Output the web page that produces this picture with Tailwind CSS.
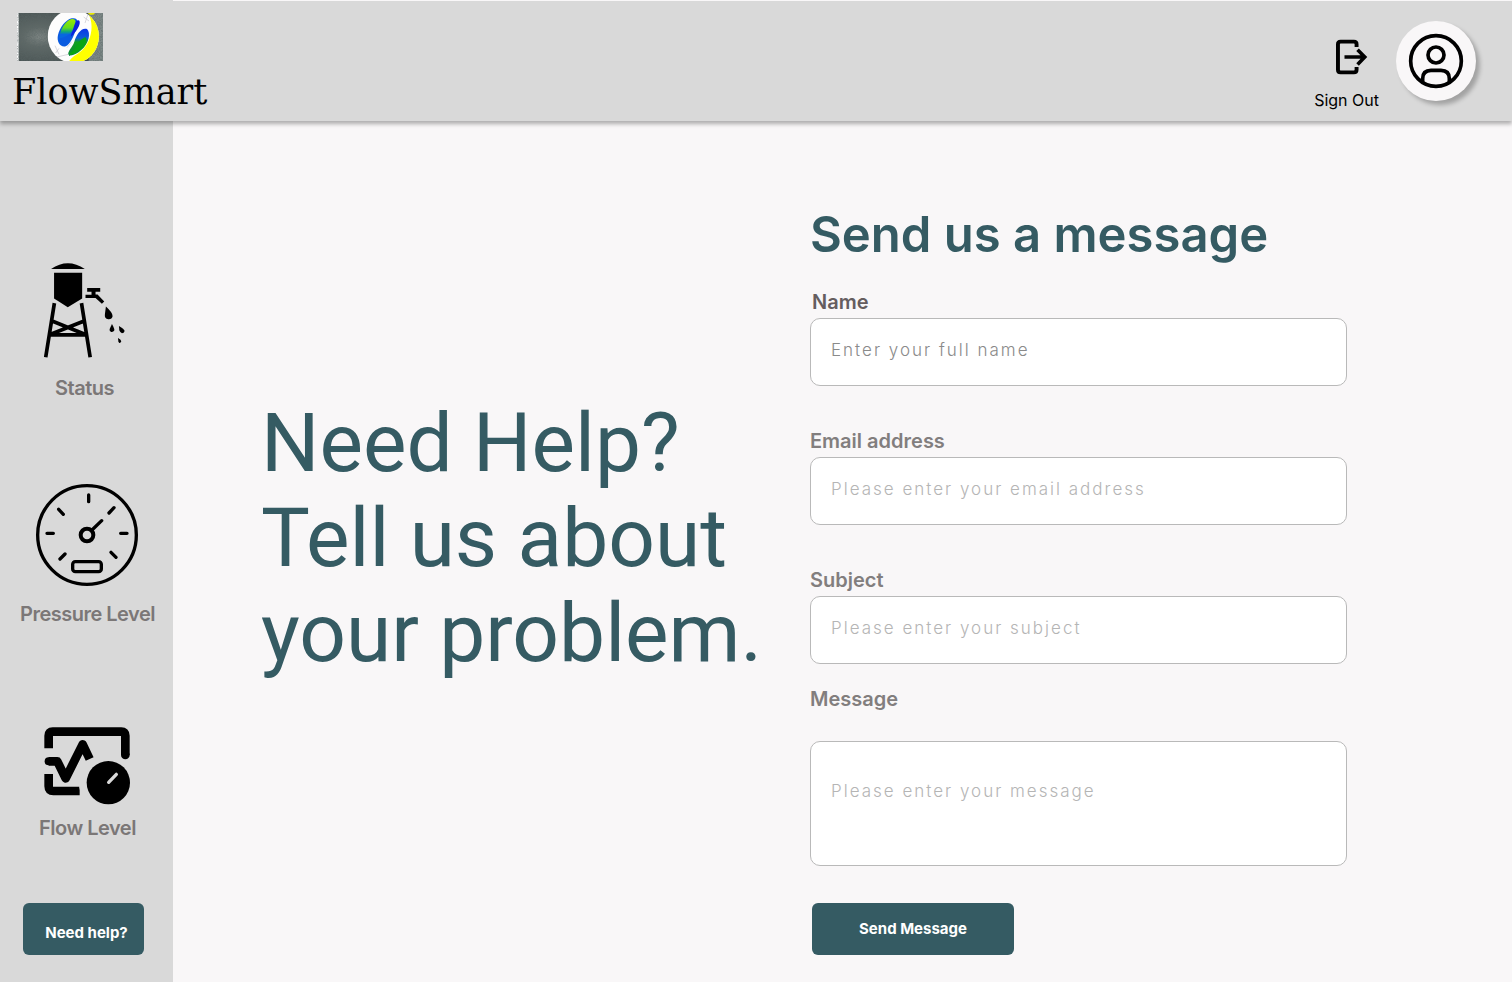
<!DOCTYPE html>
<html lang="en">
<head>
<meta charset="utf-8">
<meta name="viewport" content="width=device-width, initial-scale=1">
<title>FlowSmart - Need help?</title>
<script src="https://cdn.jsdelivr.net/npm/@tailwindcss/browser@4"></script>
</head>
<body class="flex min-h-screen flex-col bg-[#f9f7f8] font-['Inter',sans-serif]">
<header class="relative z-10 bg-[#d9d9d9] shadow-[0_3px_4px_rgba(0,0,0,0.3)]">
  <div class="ml-[173px] h-px bg-[#f9f7f8]"></div>
  <div class="flex h-[120px] items-start justify-between">
    <a href="#" class="flex flex-col pt-3 text-black">
      <svg class="ml-[17px] h-12 w-[86px]" viewBox="0 0 258 144" aria-hidden="true">
        <defs>
          <radialGradient id="steel" cx=".25" cy=".5" r=".8"><stop offset="0" stop-color="#7d8583"/><stop offset=".25" stop-color="#5f6967"/><stop offset="1" stop-color="#3d4849"/></radialGradient>
          <linearGradient id="leafA" x1="0" y1="0" x2="0" y2="1"><stop offset="0" stop-color="#9be800"/><stop offset=".45" stop-color="#62dc1e"/><stop offset=".65" stop-color="#12a878"/><stop offset=".8" stop-color="#0768e0"/></linearGradient>
          <linearGradient id="leafB" x1="0" y1="0" x2="0" y2="1"><stop offset="0" stop-color="#0b35e8"/><stop offset=".35" stop-color="#0b5bd8"/><stop offset=".5" stop-color="#12a01e"/><stop offset="1" stop-color="#0a8a3c"/></linearGradient>
          <filter id="grain"><feTurbulence type="fractalNoise" baseFrequency=".6" numOctaves="2"/><feColorMatrix values="0 0 0 0 .1  0 0 0 0 .13  0 0 0 0 .13  1.2 0 0 0 -.4"/></filter>
          <clipPath id="disc"><path d="M92 70a76 80 0 0 1 76-80a78 80 0 0 1 78 80a76 80 0 0 1-76 80a78 80 0 0 1-78-80z"/></clipPath>
        </defs>
        <rect width="258" height="144" fill="#fff"/>
        <rect x="5" width="253" height="144" fill="url(#steel)"/>
        <rect x="215" width="43" height="144" fill="#7d8987"/>
        <rect x="5" width="253" height="144" filter="url(#grain)"/>
        <g clip-path="url(#disc)">
          <rect x="85" y="-12" width="165" height="168" fill="#fdfdfd"/>
          <path d="M212 0C234 30 224 92 190 116C176 126 158 136 154 150H250V-10H212Z" fill="#ffff00"/>
        </g>
        <path d="M214 2q14 8 20-2h-20z" fill="#e8e800"/>
        <path d="M114 98l12 26M126 106l-10 14M120 132l34-8M200 12l16 12M212 6l-8 24M150 104l14-18" stroke="#c6c4cc" stroke-width="2" fill="none"/>
        <path d="M164 16C184 12 184 28 178 46C170 72 158 96 146 100C130 104 118 86 123 66C128 44 146 20 164 16Z" fill="#0a5be0"/>
        <path d="M162 19C178 15 178 30 172 44C164 62 146 72 128 76C126 56 144 24 162 19Z" fill="url(#leafA)"/>
        <path d="M182 22C194 20 188 44 172 60C164 70 160 74 162 66C170 50 172 26 182 22Z" fill="#0b22dc"/>
        <path d="M210 48C222 60 216 92 192 112C176 126 158 132 154 124C152 114 166 104 172 86C178 64 194 42 210 48Z" fill="url(#leafB)"/>
        <path d="M205 72C216 84 196 108 178 119C164 127 155 126 158 121C178 110 176 86 205 72Z" fill="#0aa514"/>
      </svg>
      <span class="ml-3 mt-1 font-['DejaVu_Serif',serif] text-[35px] leading-[54px]">FlowSmart</span>
    </a>
    <div class="flex items-start pr-9">
      <button type="button" class="mr-[17px] mt-[38px] flex flex-col items-center text-black">
        <svg class="ml-2.5 h-9 w-8" viewBox="138 117 98 108" fill="none" stroke="#000" stroke-width="12" aria-hidden="true">
          <path d="M201 140V132Q201 124 193 124H152Q144 124 144 132V210Q144 218 152 218H193Q201 218 201 210V202"/>
          <path d="M164 171H226M204 149L226 171L204 194" stroke-width="11"/>
        </svg>
        <span class="mt-[13px] text-base leading-6">Sign Out</span>
      </button>
      <button type="button" aria-label="Profile" class="mt-5 flex size-20 items-center justify-center rounded-full bg-[#f9f7f8] shadow-[4px_4px_4px_rgba(0,0,0,0.25)]">
        <svg class="size-14" viewBox="354 99 168 168" fill="none" stroke="#000" stroke-width="11" aria-hidden="true">
          <circle cx="438" cy="183" r="76"/><circle cx="438" cy="165" r="24"/>
          <path d="M398 246V236Q398 211 423 211H453Q478 211 478 236V246"/>
        </svg>
      </button>
    </div>
  </div>
</header>

<div class="flex flex-1">
  <nav class="flex w-[173px] shrink-0 flex-col items-center bg-[#d9d9d9] pt-[142px] pl-0.5 text-xl font-semibold tracking-tight text-[#7b7777]">
    <a href="#" class="flex flex-col items-center pr-1.5">
      <svg class="h-[95px] w-[82px]" viewBox="72 39 245 284" aria-hidden="true">
        <path d="M93 57Q143 22 194 57Z"/>
        <path d="M102 68H186V145L143 171L102 145Z"/>
        <path d="M103 159L77 321M184 159L210 321M90 254H198M98 213L194 252M190 213L92 252" fill="none" stroke="#000" stroke-width="11"/>
        <path d="M201 114H240V125H226V133H232L252 154L245 161L226 144H196V134H214V125H201Z"/>
        <path d="M257 169Q278 188 277 198Q275 208 264 207Q252 205 254 192Z"/>
        <path d="M275 221Q284 236 282 241Q279 246 273 245Q267 243 268 237Z"/>
        <path d="M296 227Q312 236 313 242Q311 249 305 249Q299 246 297 240Z"/>
        <path d="M293 263Q302 267 303 273Q301 279 297 278Q293 275 294 271Z"/>
      </svg>
      <span class="mt-[15px] leading-[30px]">Status</span>
    </a>
    <a href="#" class="mt-20 flex flex-col items-center">
      <svg class="h-[104px] w-[104px]" viewBox="75 39 312 312" fill="none" stroke="#000" stroke-width="10" stroke-linecap="round" aria-hidden="true">
        <circle cx="231" cy="195" r="148"/>
        <circle cx="231" cy="195" r="19" stroke-width="12"/>
        <path d="M246 180L275 152M236 75V95M297 129L312 113M146 118L160 133M111 190H130M332 190H351M150 267L165 252M303 247L318 262"/>
        <rect x="188" y="275" width="86" height="30" rx="8"/>
      </svg>
      <span class="mt-3 leading-[30px]">Pressure Level</span>
    </a>
    <a href="#" class="mt-[98px] flex flex-col items-center">
      <svg class="h-[78px] w-[86px]" viewBox="102 50 258 234" fill="none" stroke="#000" stroke-width="26" aria-hidden="true">
        <path d="M116 114V76Q116 64 128 64H334Q346 64 346 76V134" />
        <circle cx="346" cy="134" r="13" fill="#000" stroke="none"/>
        <path d="M116 191V228Q116 242 130 242H209"/>
        <path d="M116 153H142L167 204L218 102L239 146" stroke-linejoin="round"/>
        <circle cx="116" cy="153" r="12" fill="#000" stroke="none"/>
        <path d="M207 228L214 256H232V228Z" fill="#d9d9d9" stroke="none"/>
        <circle cx="295" cy="217" r="65" fill="#000" stroke="none"/>
        <path d="M296 216L319 192" stroke="#d9d9d9" stroke-width="10" stroke-linecap="round"/>
      </svg>
      <span class="mt-2 leading-[30px]">Flow Level</span>
    </a>
    <button type="button" class="mr-2 mt-[60px] h-[52px] w-[121px] rounded-md bg-[#355b63] pl-1.5 pt-1.5 text-[15px] font-bold tracking-normal text-white">Need help?</button>
  </nav>

  <main class="flex flex-1 pl-[88px] pr-[165px] pb-[27px]">
    <h1 class="w-[549px] shrink-0 pt-[275px] font-['Roboto',sans-serif] text-[82px] leading-[95px] text-[#355b63]">Need Help?<br>Tell us about<br>your problem.</h1>
    <form class="flex flex-1 flex-col items-stretch pt-[84px] text-[#827e7e]">
      <h2 class="text-[49px] leading-[60px] font-semibold text-[#355b63]">Send us a message</h2>
      <label for="name" class="mt-[21px] pl-0.5 text-xl leading-8 font-semibold text-[#655d5f]">Name</label>
      <input id="name" type="text" placeholder="Enter your full name" class="h-[68px] rounded-[10px] border border-[#b9b9b9] bg-white px-5 pb-1 text-[17px] font-light tracking-[2px] text-black placeholder:text-[#8a8a8a]">
      <label for="email" class="mt-[39px] text-xl leading-8 font-semibold">Email address</label>
      <input id="email" type="email" placeholder="Please enter your email address" class="h-[68px] rounded-[10px] border border-[#b9b9b9] bg-white px-5 pb-1 text-[17px] font-light tracking-[2px] text-black placeholder:text-[#b5b5b5]">
      <label for="subject" class="mt-[39px] text-xl leading-8 font-semibold">Subject</label>
      <input id="subject" type="text" placeholder="Please enter your subject" class="h-[68px] rounded-[10px] border border-[#b9b9b9] bg-white px-5 pb-1 text-[17px] font-light tracking-[2px] text-black placeholder:text-[#b5b5b5]">
      <label for="message" class="mt-[19px] text-xl leading-8 font-semibold">Message</label>
      <textarea id="message" placeholder="Please enter your message" class="mt-[26px] h-[125px] resize-none rounded-[10px] border border-[#b9b9b9] bg-white px-5 pt-[37px] text-[17px] leading-6 font-light tracking-[2px] text-black placeholder:text-[#b5b5b5]"></textarea>
      <button type="submit" class="ml-0.5 mt-[37px] h-[52px] w-[202px] rounded-md bg-[#355b63] text-[15px] font-bold text-white">Send Message</button>
    </form>
  </main>
</div>
</body>
</html>
